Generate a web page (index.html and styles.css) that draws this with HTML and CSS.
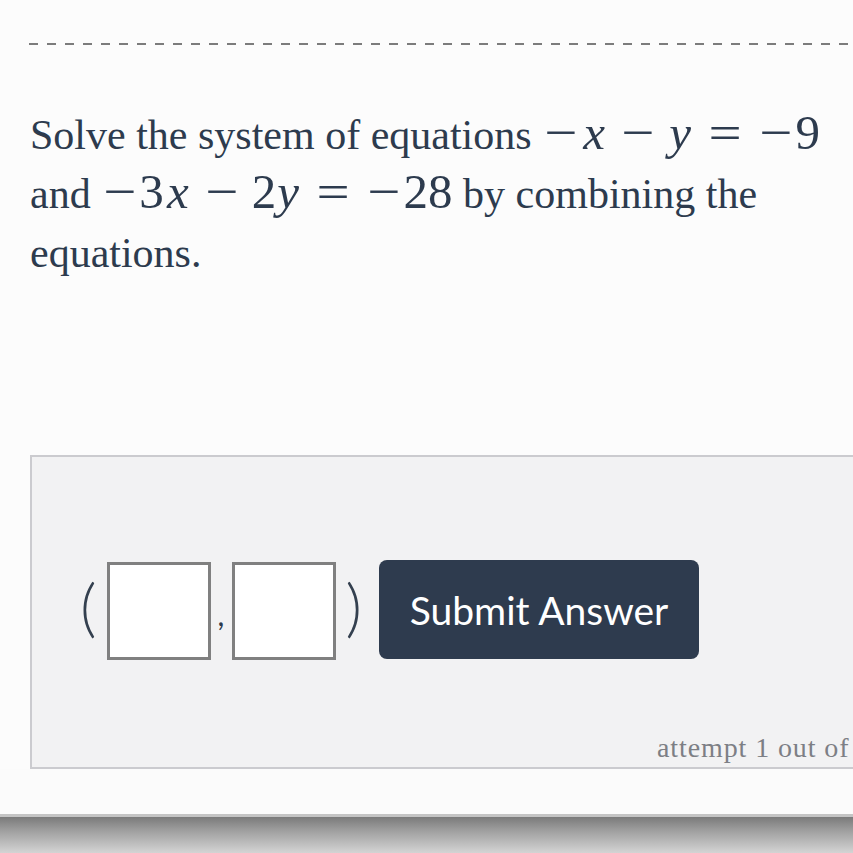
FILE: index.html
```html
<!DOCTYPE html>
<html>
<head>
<meta charset="utf-8">
<link rel="stylesheet" href="styles.css">
</head>
<body>
<div class="page">
  <div class="rule"></div>
  <p class="question">Solve the system of equations <span class="m"><span class="mo">−</span><span class="mi w-x">x</span><span class="mo bin">−</span><span class="mi w-y">y</span><span class="mo rel">=</span><span class="mo">−</span><span class="mn">9</span></span> and <span class="m"><span class="mo">−</span><span class="mn">3</span><span class="mi w-x">x</span><span class="mo bin">−</span><span class="mn">2</span><span class="mi w-y">y</span><span class="mo rel">=</span><span class="mo">−</span><span class="mn">2</span><span class="mn">8</span></span> by combining the equations.</p>
  <div class="answer">
    <div class="answer-row">
      <span class="paren">(</span>
      <input class="cell" type="text" aria-label="x">
      <span class="comma">,</span>
      <input class="cell" type="text" aria-label="y">
      <span class="paren">)</span>
      <button class="submit">Submit Answer</button>
    </div>
    <div class="attempt">attempt 1 out of 3</div>
  </div>
</div>
<div class="screen-edge"></div>
</body>
</html>
```
FILE: styles.css
```css
html, body {
  margin: 0;
  padding: 0;
}
body {
  background: #fcfcfc;
  overflow: hidden;
  width: 853px;
  height: 853px;
  color: #2d3b4e;
}
.page {
  padding: 43px 0 0 29px;
}
.rule {
  height: 2px;
  width: 830px;
  background: repeating-linear-gradient(90deg, #7c7c7c 0 9px, transparent 9px 18px);
}
.question {
  margin: 61px 0 0 1px;
  width: 823px;
  font-family: "Liberation Serif", "Times New Roman", serif;
  font-size: 42px;
  line-height: 59px;
  color: #2d3b4e;
}
.m {
  white-space: nowrap;
  font-size: 49px;
  line-height: 0;
  font-family: "Liberation Serif", serif;
}
.m > span {
  display: inline-block;
  text-align: center;
  line-height: 30px;
}
.mo {
  width: 0.778em;
  transform: scaleX(1.2);
}
.mo.bin {
  margin: 0 0.2222em;
}
.mo.rel {
  margin: 0 0.2778em;
}
.mi {
  font-style: italic;
}
.w-x { width: 0.572em; }
.w-y { width: 0.49em; }
.mn { width: 0.5em; }

.answer {
  margin-top: 172px;
  margin-left: 1px;
  width: 860px;
  border: 2px solid #cbcbcf;
  background: #f2f2f3;
  padding: 103px 0 4px;
}
.answer-row {
  display: flex;
  align-items: center;
  height: 99px;
  padding-left: 48px;
}
.paren {
  font-family: Lato, "Noto Sans", sans-serif;
  font-weight: 300;
  font-size: 64px;
  line-height: 1;
  color: #34404f;
  padding-bottom: 8px;
}
.cell {
  box-sizing: border-box;
  width: 104px;
  height: 98px;
  border: 3px solid #808080;
  background: #fff;
  margin: 3px 0 0 0;
  padding: 0;
  outline: none;
}
.paren:first-child { margin-right: 10px; }
.cell + .paren { margin-left: 10px; }
.comma {
  font-family: Lato, sans-serif;
  font-size: 30px;
  line-height: 1;
  width: 21px;
  text-align: center;
  padding-top: 8px;
  color: #2d3b4e;
}
.submit {
  margin-left: 17px;
  width: 320px;
  height: 99px;
  border: none;
  border-radius: 8px;
  background: #2e3b4e;
  color: #fff;
  font-family: Lato, "Noto Sans", sans-serif;
  font-size: 39px;
  padding: 0;
}
.attempt {
  margin-top: 74px;
  padding-left: 625px;
  font-family: "Liberation Serif", serif;
  font-size: 28px;
  line-height: 30px;
  letter-spacing: 0.9px;
  color: #7d7f85;
  white-space: nowrap;
}
.screen-edge {
  height: 84px;
  background: linear-gradient(180deg, #fbfbfb 0 45px, #c4c4c4 45px 48px, #7a7a7a 48px, #a0a0a0 62px, #d4d4d4 84px);
}
```
